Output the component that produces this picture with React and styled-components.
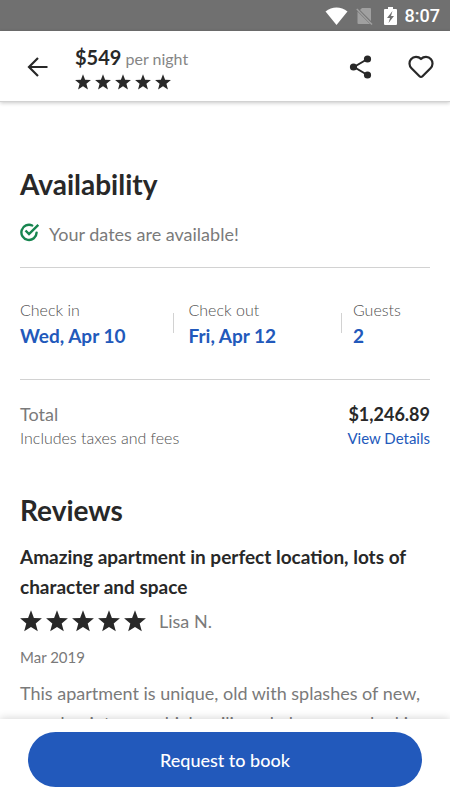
import styled, { createGlobalStyle, css } from "styled-components";

const GlobalStyle = createGlobalStyle`
    * {
        box-sizing: border-box;
    }
    body {
        margin: 0;
        background-color: #ffffff;
        color: #282828;
        font-family: Lato, "Open Sans", sans-serif;
    }
    h1, h2, h3, p, dl, dt, dd {
        margin: 0;
    }
    button {
        border: 0;
        background: none;
        font-family: inherit;
        cursor: pointer;
    }
`

const Screen = styled.div`
    height: 100vh;
    display: flex;
    flex-direction: column;
`

const StatusBar = styled.div`
    height: 31px;
    flex-shrink: 0;
    display: flex;
    align-items: center;
    justify-content: flex-end;
    padding: 0 10px;
    background-color: #707070;
    color: #ffffff;
`
const StatusIcon = styled.svg`
    height: 20px;
    margin-right: ${({ $gap }) => $gap}px;
`
const Clock = styled.span`
    font-family: Roboto, sans-serif;
    font-size: 18px;
    font-weight: 500;
    line-height: 20px;
`

const Header = styled.header`
    height: 71px;
    flex-shrink: 0;
    display: flex;
    align-items: center;
    padding: 2px 12px 0 20px;
    background-color: #ffffff;
    border-bottom: 1px solid #d2d2d2;
    box-shadow: 0 1px 4px rgba(0, 0, 0, 0.22);
    position: relative;
    z-index: 1;
`
const IconButton = styled.button`
    width: 34px;
    height: 34px;
    padding: 0;
    display: flex;
    align-items: center;
    justify-content: center;
    color: #282828;
`
const Summary = styled.div`
    flex: 1;
    display: flex;
    flex-direction: column;
    gap: 3px;
    padding-left: 21px;
`
const Rate = styled.p`
    font-size: 16px;
    line-height: 24px;
    color: #868686;
`
const Price = styled.strong`
    font-size: 20px;
    font-weight: 700;
    color: #282828;
`
const Actions = styled.div`
    display: flex;
    gap: 26px;
`

const Stars = styled.div`
    display: flex;
    gap: ${({ $gap }) => $gap}px;
`
const Star = styled.svg`
    display: block;
    width: ${({ $size }) => $size}px;
    height: ${({ $size }) => $size}px;
    fill: #282828;
`

const Content = styled.main`
    flex: 1;
    min-height: 0;
    overflow-y: auto;
    scrollbar-width: none;
    padding: 64px 20px 20px;
`
const SectionTitle = styled.h2`
    font-size: 28px;
    font-weight: 700;
    line-height: 36px;
`
const Notice = styled.p`
    display: flex;
    align-items: flex-start;
    gap: 9px;
    margin-top: 20px;
    padding-bottom: 20px;
    border-bottom: 1px solid #d2d2d2;
    font-size: 18px;
    line-height: 25px;
    color: #7a7a7a;
`
const Stay = styled.dl`
    display: flex;
    padding: 31px 0 28px;
    border-bottom: 1px solid #d2d2d2;
`
const StayItem = styled.div`
    flex: 1;
    display: flex;
    align-items: center;
    justify-content: space-between;

    & + & {
        padding-left: 15px;
    }
    ${({ $last }) => $last ? css`
        flex: 0 0 88px;

        && {
            padding-left: 11px;
        }
    ` : css`
        &::after {
            content: "";
            width: 1px;
            height: 20px;
            margin-bottom: 4px;
            background-color: #d2d2d2;
        }
    `}
`
const Label = styled.dt`
    font-size: 16px;
    font-weight: 300;
    line-height: 22px;
    color: #505050;
`
const Value = styled.dd`
    font-size: 19px;
    font-weight: 700;
    line-height: 30px;
    color: #2259bb;
`
const Total = styled.div`
    display: flex;
    justify-content: space-between;
    padding: 22px 0 42px;
    font-size: 16px;
    font-weight: 300;
    line-height: 24px;
    color: #505050;
`
const TotalLabel = styled.p`
    font-size: 18px;
    font-weight: 400;
    color: #7a7a7a;
`
const Amount = styled.div`
    text-align: right;
`
const Sum = styled.p`
    font-size: 18px;
    font-weight: 700;
    color: #282828;
`
const DetailsLink = styled.a`
    font-size: 15px;
    font-weight: 400;
    color: #2259bb;
    text-decoration: none;
`

const ReviewTitle = styled.h3`
    margin-top: 14px;
    font-size: 19px;
    font-weight: 700;
    line-height: 30px;
`
const Reviewer = styled.div`
    display: flex;
    align-items: center;
    gap: 13px;
    line-height: 38px;
    font-size: 18px;
    color: #7a7a7a;
`
const ReviewDate = styled.p`
    font-size: 15px;
    line-height: 34px;
    color: #7a7a7a;
`
const ReviewText = styled.p`
    margin-top: 4px;
    font-size: 18px;
    line-height: 30px;
    color: #7a7a7a;
`

const Footer = styled.footer`
    flex-shrink: 0;
    padding: 13px 28px;
    background-color: #ffffff;
    box-shadow: 0 -1px 8px rgba(0, 0, 0, 0.16);
    position: relative;
    z-index: 1;
`
const BookButton = styled.button`
    width: 100%;
    height: 55px;
    border-radius: 28px;
    background-color: #2259bb;
    color: #ffffff;
    font-size: 18px;
    font-weight: 500;
`

const stay = [
    { label: "Check in", value: "Wed, Apr 10" },
    { label: "Check out", value: "Fri, Apr 12" },
    { label: "Guests", value: "2" },
]

const Rating = ({ size, gap }) => (
    <Stars $gap={gap} role="img" aria-label="5 stars">
        {[1, 2, 3, 4, 5].map((el) => (
            <Star key={el} $size={size} viewBox="0 0 22 22">
                <path d="M11 0.3 L13.9 7.9 L21.9 8.3 L15.7 13.4 L17.8 21.3 L11 16.9 L4.2 21.3 L6.3 13.4 L0.1 8.3 L8.1 7.9 Z" />
            </Star>
        ))}
    </Stars>
)

const App = () => {
    return (
        <Screen>
            <GlobalStyle />
            <StatusBar>
                <StatusIcon $gap={8} width="23" viewBox="0 0 23 20">
                    <path d="M0.5 5.5 C7 0.2 16 0.2 22.5 5.5 L11.5 19 Z" fill="#ffffff" />
                </StatusIcon>
                <StatusIcon $gap={11} width="17" viewBox="0 0 17 20">
                    <path d="M6 2 H14 Q15 2 15 3 V15 L4 4 Z M1.5 5.5 L14 18 H2.5 Q1.5 18 1.5 17 Z" fill="#a0a0a0" />
                    <path d="M0.8 3 L16 18.5" stroke="#a0a0a0" strokeWidth="1.5" />
                </StatusIcon>
                <StatusIcon $gap={8} width="13" viewBox="0 0 13 20">
                    <path d="M4 1 H9 V3 H12 Q13 3 13 4 V18 Q13 19 12 19 H1 Q0 19 0 18 V4 Q0 3 1 3 H4 Z" fill="#ffffff" />
                    <path d="M8.5 5 L3 12 H6 L4.5 17 L10 10 H7 Z" fill="#707070" />
                </StatusIcon>
                <Clock>8:07</Clock>
            </StatusBar>
            <Header>
                <IconButton aria-label="Back">
                    <svg width="22" height="22" viewBox="0 0 22 22" fill="none" stroke="currentColor" strokeWidth="2.2">
                        <path d="M21.5 11 H3 M12 2 L3 11 L12 20" />
                    </svg>
                </IconButton>
                <Summary>
                    <Rate><Price>$549</Price> per night</Rate>
                    <Rating size={16} gap={4} />
                </Summary>
                <Actions>
                    <IconButton aria-label="Share">
                        <svg width="24" height="26" viewBox="0 0 24 26" fill="currentColor">
                            <path d="M18.5 5 L5 13 L18.5 21" fill="none" stroke="currentColor" strokeWidth="2" />
                            <circle cx="18.5" cy="5" r="3.6" />
                            <circle cx="4.5" cy="13" r="3.6" />
                            <circle cx="18.5" cy="21" r="3.6" />
                        </svg>
                    </IconButton>
                    <IconButton aria-label="Save">
                        <svg width="26" height="24" viewBox="0 0 26 24" fill="none" stroke="currentColor" strokeWidth="2.2">
                            <path d="M13 22 Q12.2 22 11.5 21.3 L3.5 13.3 C1 10.7 0.8 6.7 3 4.2 C5.6 1.2 10.3 1.2 13 4 C15.7 1.2 20.4 1.2 23 4.2 C25.2 6.7 25 10.7 22.5 13.3 L14.5 21.3 Q13.8 22 13 22 Z" strokeLinejoin="round" />
                        </svg>
                    </IconButton>
                </Actions>
            </Header>
            <Content>
                <SectionTitle>Availability</SectionTitle>
                <Notice>
                    <svg width="20" height="20" viewBox="0 0 20 20" fill="none" stroke="#17854f" strokeWidth="2.4">
                        <path d="M12.2 3.5 A7.6 7.6 0 1 0 16.6 10.6" strokeLinecap="round" />
                        <path d="M5.5 8.5 L9 12 L18.3 2.8" />
                    </svg>
                    Your dates are available!
                </Notice>
                <Stay>
                    {stay.map((el, i) => (
                        <StayItem key={el.label} $last={i === stay.length - 1}>
                            <div>
                                <Label>{el.label}</Label>
                                <Value>{el.value}</Value>
                            </div>
                        </StayItem>
                    ))}
                </Stay>
                <Total>
                    <div>
                        <TotalLabel>Total</TotalLabel>
                        <p>Includes taxes and fees</p>
                    </div>
                    <Amount>
                        <Sum>$1,246.89</Sum>
                        <DetailsLink href="#details">View Details</DetailsLink>
                    </Amount>
                </Total>
                <SectionTitle>Reviews</SectionTitle>
                <ReviewTitle>Amazing apartment in perfect location, lots of character and space</ReviewTitle>
                <Reviewer>
                    <Rating size={22} gap={4} />
                    Lisa N.
                </Reviewer>
                <ReviewDate>Mar 2019</ReviewDate>
                <ReviewText>
                    This apartment is unique, old with splashes of new, wood points, very high ceilings, balcony overlooking
                </ReviewText>
            </Content>
            <Footer>
                <BookButton>Request to book</BookButton>
            </Footer>
        </Screen>
    )
}

export default App;
